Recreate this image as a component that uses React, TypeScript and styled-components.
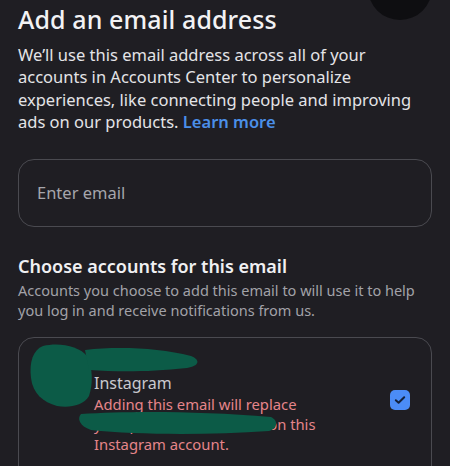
import React from 'react';
import styled, { createGlobalStyle } from 'styled-components';

const GlobalStyle = createGlobalStyle`
  html, body {
    margin: 0;
    padding: 0;
    background: #1f1e23;
  }
  body {
    font-family: "Noto Sans", "Liberation Sans", sans-serif;
    overflow: hidden;
  }
`;

const Page = styled.div`
  position: relative;
  width: 450px;
  height: 466px;
  overflow: hidden;
  background: #1f1e23;
  padding: 0 18px;
  box-sizing: border-box;
`;

const Avatar = styled.div`
  position: absolute;
  top: -44px;
  right: 18px;
  width: 64px;
  height: 64px;
  border-radius: 50%;
  background: #0e0e11;
`;

const Title = styled.h1`
  margin: 0;
  padding-top: 3px;
  font-size: 25px;
  font-weight: 500;
  line-height: 32px;
  color: #f2f2f4;
  letter-spacing: 0.1px;
`;

const Intro = styled.p`
  margin: 9px 0 0;
  font-size: 16.5px;
  line-height: 22.4px;
  color: #e4e4e7;
`;

const Link = styled.span`
  color: #4b8fe8;
  font-weight: 600;
`;

const Field = styled.div`
  margin-top: 25px;
  height: 66px;
  border: 1px solid #4a4a50;
  border-radius: 16px;
  display: flex;
  align-items: center;
  padding: 0 18px;
  font-size: 16.5px;
  color: #a6a6ac;
`;

const SectionTitle = styled.h2`
  margin: 27px 0 0;
  font-size: 18px;
  font-weight: 600;
  line-height: 24px;
  color: #f0f0f2;
`;

const SectionText = styled.p`
  margin: 2px 0 0;
  font-size: 14.5px;
  line-height: 20px;
  color: #a2a2a8;
`;

const Card = styled.div`
  position: relative;
  margin-top: 17px;
  height: 160px;
  border: 1px solid #4a4a50;
  border-radius: 16px;
  display: flex;
  align-items: flex-start;
  padding: 34px 20px 0 75px;
`;

const AccountInfo = styled.div`
  flex: 1;
  display: flex;
  flex-direction: column;
`;

const AccountName = styled.div`
  font-size: 16px;
  line-height: 22px;
  color: #c9c9ce;
`;

const Warning = styled.div`
  font-size: 14.8px;
  line-height: 20px;
  color: #e5858a;
`;

const Check = styled.div`
  margin-top: 18px;
  margin-right: 1px;
  width: 20px;
  height: 20px;
  border-radius: 5px;
  background: #4b8cf6;
  display: flex;
  align-items: center;
  justify-content: center;
`;

const Scribble = styled.svg`
  position: absolute;
  left: 0;
  top: 0;
  pointer-events: none;
`;

export default function App() {
  return (
    <>
      <GlobalStyle />
      <Page>
        <Avatar />
        <Title>Add an email address</Title>
        <Intro>
          We’ll use this email address across all of your accounts in Accounts Center to
          personalize experiences, like connecting people and improving ads on our
          products. <Link>Learn more</Link>
        </Intro>
        <Field>Enter email</Field>
        <SectionTitle>Choose accounts for this email</SectionTitle>
        <SectionText>
          Accounts you choose to add this email to will use it to help you log in and
          receive notifications from us.
        </SectionText>
        <Card>
          <AccountInfo>
            <AccountName>Instagram</AccountName>
            <Warning>
              Adding this email will replace
              <br />
              your prior email address on this
              <br />
              Instagram account.
            </Warning>
          </AccountInfo>
          <Check>
            <svg width="12" height="10" viewBox="0 0 12 10">
              <path d="M1.8 5.2 L4.6 7.8 L10.2 2.2" fill="none" stroke="#14213a" strokeWidth="2" strokeLinecap="round" strokeLinejoin="round" />
            </svg>
          </Check>
          <Scribble width="414" height="160" viewBox="0 0 414 160">
            <path
              d="M24 8 C 40 4, 60 8, 68 18 C 74 30, 74 46, 70 58 C 64 68, 50 70, 38 68 C 24 64, 14 56, 12 40 C 10 24, 14 12, 24 8 Z"
              fill="#0c5b47"
            />
            <path
              d="M66 12 C 100 8, 140 10, 172 18 C 182 22, 180 28, 168 30 C 130 34, 100 34, 70 32 Z"
              fill="#0c5b47"
            />
            <path
              d="M62 76 C 110 73, 180 73, 252 79 C 260 83, 258 91, 250 93 C 190 97, 120 97, 72 92 C 60 88, 58 80, 62 76 Z"
              fill="#0c5b47"
            />
          </Scribble>
        </Card>
      </Page>
    </>
  );
}
